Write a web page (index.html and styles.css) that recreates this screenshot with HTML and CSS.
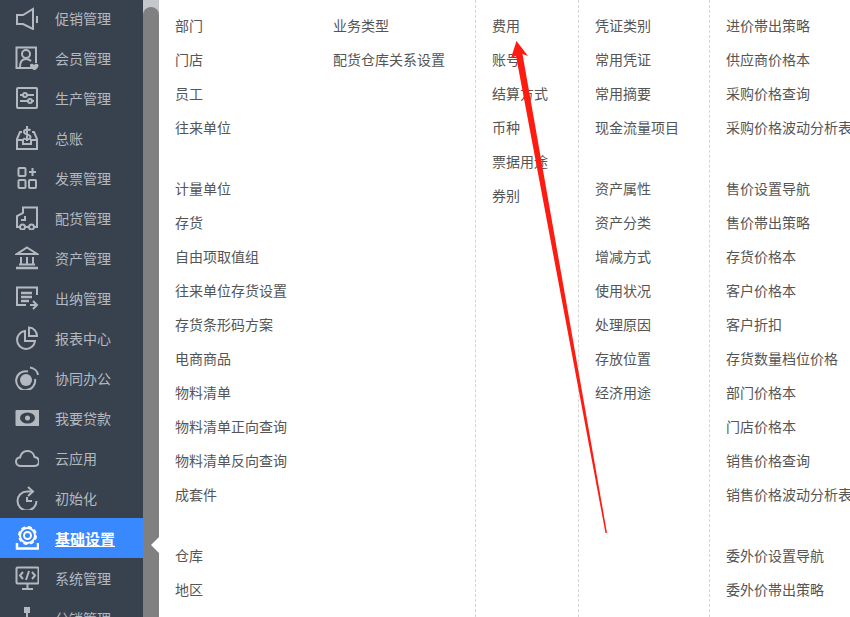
FILE: index.html
```html
<!DOCTYPE html>
<html lang="zh-CN">
<head>
    <meta charset="UTF-8">
    <meta name="viewport" content="width=device-width, initial-scale=1.0">
    <title>基础设置</title>
    <link rel="stylesheet" href="styles.css">
</head>
<body>
    <div class="page">
        <ul class="sidebar">
            <li class="nav-item">
                <svg class="nav-icon" viewBox="0 0 24 24"><path d="M2 9H8L18 3V23L8 18H2Z"/><path d="M22 10V17"/></svg>
                <span>促销管理</span>
            </li>
            <li class="nav-item">
                <svg class="nav-icon" viewBox="0 0 24 24"><path d="M17 22H1.500V1.500H21V17"/><circle cx="11" cy="8" r="4"/><path d="M5 21C5 16 7 13 11 13C14 13 15 14 16 15"/><path class="solid" d="M19 19C21 16.500 24 18 23.500 20C23 22 21 23.500 19.500 24.500C18 23.500 15.500 22 15 20C14.500 18 17 16.500 19 19Z"/></svg>
                <span>会员管理</span>
            </li>
            <li class="nav-item">
                <svg class="nav-icon" viewBox="0 0 24 24"><rect x="2" y="2" width="20" height="20" rx="1"/><path d="M5 9H19M5 15H19"/><circle class="cut" cx="10" cy="9" r="2"/><circle class="cut" cx="15" cy="15" r="2"/></svg>
                <span>生产管理</span>
            </li>
            <li class="nav-item">
                <svg class="nav-icon" viewBox="0 0 24 24"><path d="M7 6H5L2 13V23H22V13L19 6H17"/><path d="M2 14H8V18H16V14H22"/><path d="M15.500 4.500C14 3 9 3 9 6C9 9 15.500 8 15.500 11C15.500 14 10 14 8.500 12M12 0V15"/></svg>
                <span>总账</span>
            </li>
            <li class="nav-item">
                <svg class="nav-icon" viewBox="0 0 24 24"><rect x="3.500" y="2" width="7" height="8" rx="1"/><rect x="3.500" y="14" width="7" height="8" rx="1"/><rect x="14" y="14" width="7" height="8" rx="1"/><path d="M17.500 2V10M14 6H21"/></svg>
                <span>发票管理</span>
            </li>
            <li class="nav-item">
                <svg class="nav-icon" viewBox="0 0 24 24"><path d="M6 21H2V10L8 7V1.500H22V21H19"/><path d="M10 21H14"/><circle cx="7.500" cy="21" r="2.500"/><circle cx="16.500" cy="21" r="2.500"/><path d="M6 14H10V10"/></svg>
                <span>配货管理</span>
            </li>
            <li class="nav-item">
                <svg class="nav-icon" viewBox="0 0 24 24"><path d="M12 1.500L22 8H2Z"/><path d="M6 11V18M12 11V18M18 11V18M4 18.500H20"/><path class="thick" d="M1 22H23"/></svg>
                <span>资产管理</span>
            </li>
            <li class="nav-item">
                <svg class="nav-icon" viewBox="0 0 24 24"><path d="M11 19H2V1.500H22V9"/><path class="thick" d="M6 7H17M6 11H17M6 15H14"/><path d="M15 19H22M18 15L22 19L18 23"/></svg>
                <span>出纳管理</span>
            </li>
            <li class="nav-item">
                <svg class="nav-icon" viewBox="0 0 24 24"><path d="M10 5A9 9 0 1 0 20 15H10Z"/><path d="M14 1.500C18.500 1.500 22 5.500 22 10H14Z"/></svg>
                <span>报表中心</span>
            </li>
            <li class="nav-item">
                <svg class="nav-icon" viewBox="0 0 24 24"><path d="M13 5.500A9.500 9.500 0 1 0 20 13"/><circle class="solid" cx="11" cy="14" r="6"/><path d="M15 1.500C19 2 22.500 5 23 9"/></svg>
                <span>协同办公</span>
            </li>
            <li class="nav-item">
                <svg class="nav-icon" viewBox="0 0 24 24"><rect class="solid" x="0.500" y="4" width="24" height="16" rx="1"/><ellipse class="hole" cx="12.500" cy="12" rx="7.500" ry="5.500"/><circle class="solid" cx="12.500" cy="12" r="2.500"/></svg>
                <span>我要贷款</span>
            </li>
            <li class="nav-item">
                <svg class="nav-icon" viewBox="0 0 24 24"><path d="M7 20H6C3 20 1 18 1 15.500C1 13 3 11.500 5 11.500C6 7.500 9 5 12.500 5C16.500 5 19 8 19.500 11C22 11.500 24 13 24 15.500C24 18 22 20 19 20Z"/></svg>
                <span>云应用</span>
            </li>
            <li class="nav-item">
                <svg class="nav-icon" viewBox="0 0 24 24"><path d="M21.500 15A9.500 9.500 0 1 1 12 5.500H18"/><path d="M13 1L18 5.500L13 10"/><path d="M12 11V15H17"/></svg>
                <span>初始化</span>
            </li>
            <li class="nav-item active">
                <svg class="nav-icon" viewBox="0 0 24 24"><circle cx="12.500" cy="9.500" r="7.500"/><circle class="teeth" cx="12.500" cy="9.500" r="8.500"/><circle cx="12.500" cy="9.500" r="3.500"/><path class="thick" d="M2 17V22.500H23V17"/></svg>
                <span>基础设置</span>
            </li>
            <li class="nav-item">
                <svg class="nav-icon" viewBox="0 0 24 24"><rect x="1.500" y="1.500" width="22" height="16" rx="1"/><path d="M12.500 18V22M7 23H18"/><path d="M8 6L5 9.500L8 13M17 6L20 9.500L17 13M14 5L11 14"/></svg>
                <span>系统管理</span>
            </li>
            <li class="nav-item">
                <svg class="nav-icon" viewBox="0 0 24 24"><rect class="solid" x="9" y="1" width="6" height="6"/><path d="M12 7V14"/></svg>
                <span>分销管理</span>
            </li>
        </ul>

        <div class="scroll-track"><div class="scroll-thumb"></div></div>

        <div class="menu">
            <div class="menu-col col-wide">
                <div class="menu-group pair">
                    <div>
                        <a>部门</a>
                        <a>门店</a>
                        <a>员工</a>
                        <a>往来单位</a>
                    </div>
                    <div>
                        <a>业务类型</a>
                        <a>配货仓库关系设置</a>
                    </div>
                </div>
                <div class="menu-group">
                    <a>计量单位</a>
                    <a>存货</a>
                    <a>自由项取值组</a>
                    <a>往来单位存货设置</a>
                    <a>存货条形码方案</a>
                    <a>电商商品</a>
                    <a>物料清单</a>
                    <a>物料清单正向查询</a>
                    <a>物料清单反向查询</a>
                    <a>成套件</a>
                </div>
                <div class="menu-group">
                    <a>仓库</a>
                    <a>地区</a>
                </div>
            </div>
            <div class="menu-col col-fee">
                <div class="menu-group">
                    <a>费用</a>
                    <a>账号</a>
                    <a>结算方式</a>
                    <a>币种</a>
                    <a>票据用途</a>
                    <a>券别</a>
                </div>
            </div>
            <div class="menu-col col-voucher">
                <div class="menu-group">
                    <a>凭证类别</a>
                    <a>常用凭证</a>
                    <a>常用摘要</a>
                    <a>现金流量项目</a>
                </div>
                <div class="menu-group">
                    <a>资产属性</a>
                    <a>资产分类</a>
                    <a>增减方式</a>
                    <a>使用状况</a>
                    <a>处理原因</a>
                    <a>存放位置</a>
                    <a>经济用途</a>
                </div>
            </div>
            <div class="menu-col col-price">
                <div class="menu-group">
                    <a>进价帯出策略</a>
                    <a>供应商价格本</a>
                    <a>采购价格查询</a>
                    <a>采购价格波动分析表</a>
                </div>
                <div class="menu-group">
                    <a>售价设置导航</a>
                    <a>售价帯出策略</a>
                    <a>存货价格本</a>
                    <a>客户价格本</a>
                    <a>客户折扣</a>
                    <a>存货数量档位价格</a>
                    <a>部门价格本</a>
                    <a>门店价格本</a>
                    <a>销售价格查询</a>
                    <a>销售价格波动分析表</a>
                </div>
                <div class="menu-group">
                    <a>委外价设置导航</a>
                    <a>委外价帯出策略</a>
                </div>
            </div>
        </div>

        <!-- red annotation drawn on top of the screenshot -->
        <svg class="annotation" viewBox="0 0 850 617">
            <path d="M516.500 41L528 56L522.500 54L607 533H605.500L516 56L511 58Z"/>
        </svg>
    </div>
</body>
</html>
```

FILE: styles.css
```css
html, body {
    margin: 0;
    height: 100%;
    overflow: hidden;
    background: #fff;
}

body {
    font-family: "Liberation Sans", "Noto Sans CJK SC", sans-serif;
    font-size: 14px;
}

.page {
    position: relative;
    display: flex;
    height: 617px;
    overflow: hidden;
}

.sidebar {
    flex: 0 0 143px;
    margin: 0;
    padding: 0;
    list-style: none;
    background: #38424f;
}

.nav-item {
    position: relative;
    display: flex;
    align-items: center;
    gap: 16px;
    height: 40px;
    padding-left: 15px;
    color: #b4b9bf;
}

.nav-item:first-child {
    margin-top: -2px;
}

.nav-item.active {
    background: #3a88fe;
    color: #fff;
    font-size: 15px;
    font-weight: bold;
}

.nav-item.active span {
    text-decoration: underline;
}

.nav-item.active::after {
    content: "";
    position: absolute;
    top: 19px;
    right: -16px;
    border-style: solid;
    border-width: 8px 8px 8px 0;
    border-color: transparent #fff transparent transparent;
}

.nav-icon {
    flex: none;
    width: 24px;
    height: 24px;
    fill: none;
    stroke: currentColor;
    stroke-width: 2;
}

.nav-icon .solid {
    fill: currentColor;
    stroke: none;
}

.nav-icon .cut {
    fill: #38424f;
}

.nav-icon .hole {
    fill: #38424f;
    stroke: none;
}

.nav-icon .thick {
    stroke-width: 2.500;
}

.nav-icon .teeth {
    stroke-width: 2;
    stroke-dasharray: 4 2.680;
}

.scroll-track {
    flex: 0 0 16px;
    padding-top: 7px;
    box-sizing: border-box;
    background: #c4c8cd;
}

.scroll-thumb {
    height: 100%;
    background: #808080;
    border-radius: 8px 8px 0 0;
}

.menu {
    flex: 1;
    display: flex;
    min-width: 0;
    color: #555;
}

.menu-col {
    flex: none;
    box-sizing: border-box;
    height: 100%;
    padding: 9px 0 0 16px;
    border-right: 1px dashed #d5d5d5;
}

.col-wide {
    width: 317px;
}

.col-fee {
    width: 103px;
}

.col-voucher {
    width: 131px;
}

.col-price {
    flex: 1;
    min-width: 0;
    border-right: none;
    white-space: nowrap;
}

.menu-group {
    margin-bottom: 27px;
}

.menu-group.pair {
    display: grid;
    grid-template-columns: 158px 1fr;
}

.menu-group a {
    display: block;
    height: 34px;
    line-height: 34px;
}

.annotation {
    position: absolute;
    left: 0;
    top: 0;
    width: 850px;
    height: 617px;
    pointer-events: none;
}

.annotation path {
    fill: #fe1c12;
}
```
